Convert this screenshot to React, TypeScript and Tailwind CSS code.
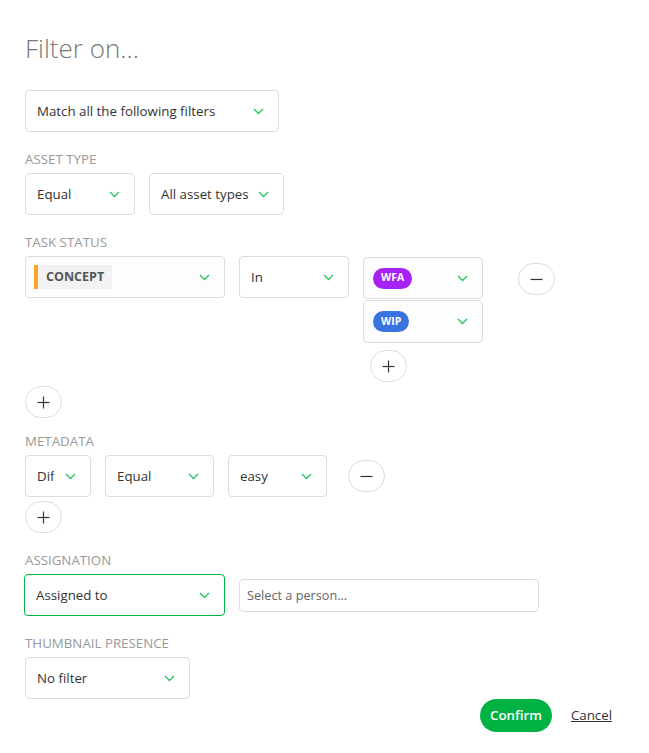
import React from "react";

const Chevron = () => (
  <svg width="11" height="7" viewBox="0 0 11 7" className="shrink-0">
    <path d="M1 1 L5.5 5.5 L10 1" fill="none" stroke="#22c55e" strokeWidth="1.3" />
  </svg>
);

function Select({
  children,
  w,
  green = false,
}: {
  children: React.ReactNode;
  w: string;
  green?: boolean;
}) {
  return (
    <div
      className={`${w} h-[42px] flex items-center justify-between pl-[11px] pr-[14px] rounded-[4px] bg-white border ${
        green ? "border-[#00b242]" : "border-[#dcdcdc]"
      } text-[13.3px] text-[#333]`}
    >
      <span className="truncate pt-[2px]">{children}</span>
      <Chevron />
    </div>
  );
}

const Round = ({ minus = false }: { minus?: boolean }) => (
  <div className="w-[37px] h-[32px] rounded-full border border-[#dcdcdc] bg-white flex items-center justify-center shrink-0">
    <svg width="13" height="13" viewBox="0 0 13 13">
      <path d="M0.5 6.5 H12.5" stroke="#333" strokeWidth="1.2" />
      {!minus && <path d="M6.5 0.5 V12.5" stroke="#333" strokeWidth="1.2" />}
    </svg>
  </div>
);

const Label = ({ children }: { children: React.ReactNode }) => (
  <div className="text-[13.3px] text-[#999] uppercase leading-[18px] mb-[5px]">{children}</div>
);

export default function App() {
  return (
    <div
      className="w-[649px] h-[753px] bg-white px-[25px] pt-[30px] relative"
      style={{ fontFamily: "'Open Sans', 'Noto Sans', sans-serif" }}
    >
      <h1 className="text-[26px] font-light text-[#777] leading-[36px]">Filter on...</h1>

      <div className="mt-[24px]">
        <Select w="w-[254px]">Match all the following filters</Select>
      </div>

      <div className="mt-[18px]">
        <Label>Asset type</Label>
        <div className="flex gap-[14px]">
          <Select w="w-[110px]">Equal</Select>
          <Select w="w-[135px]">All asset types</Select>
        </div>
      </div>

      <div className="mt-[18px]">
        <Label>Task status</Label>
        <div className="flex gap-[14px] items-start">
          <div className="w-[200px] h-[42px] flex items-center justify-between pl-[8px] pr-[14px] rounded-[4px] bg-[#fdfdfd] border border-[#dcdcdc]">
            <div className="flex items-stretch h-[24px]">
              <div className="w-[4px] bg-[#f5a623]" />
              <div className="bg-[#f2f2f2] px-[8px] pt-[1px] flex items-center text-[12.5px] font-bold text-[#555]">
                CONCEPT
              </div>
            </div>
            <Chevron />
          </div>
          <Select w="w-[110px]">In</Select>
          <div className="flex flex-col items-start">
            <div className="w-[120px] h-[42px] flex items-center justify-between pl-[9px] pr-[14px] rounded-[4px] bg-[#fdfdfd] border border-[#dcdcdc] mt-[1px]">
              <span className="h-[21px] px-[8px] rounded-full bg-[#a722f5] text-white text-[10.5px] font-bold flex items-center">
                WFA
              </span>
              <Chevron />
            </div>
            <div className="w-[120px] h-[43px] flex items-center justify-between pl-[9px] pr-[14px] rounded-[4px] bg-[#fdfdfd] border border-[#dcdcdc] mt-[1px]">
              <span className="h-[21px] px-[8px] rounded-full bg-[#3873e0] text-white text-[10.5px] font-bold flex items-center">
                WIP
              </span>
              <Chevron />
            </div>
            <div className="mt-[7px] ml-[7px]">
              <Round />
            </div>
          </div>
          <div className="ml-[21px] mt-[7px]">
            <Round minus />
          </div>
        </div>
        <div className="mt-[4px]">
          <Round />
        </div>
      </div>

      <div className="mt-[14px]">
        <Label>Metadata</Label>
        <div className="flex gap-[14px] items-start">
          <Select w="w-[66px]">Dif</Select>
          <Select w="w-[109px]">Equal</Select>
          <Select w="w-[99px]">easy</Select>
          <div className="ml-[7px] mt-[5px]">
            <Round minus />
          </div>
        </div>
        <div className="mt-[4px]">
          <Round />
        </div>
      </div>

      <div className="mt-[18px]">
        <Label>Assignation</Label>
        <div className="flex gap-[14px] items-center -ml-px">
          <Select w="w-[201px]" green>
            Assigned to
          </Select>
          <div className="w-[300px] h-[33px] rounded-[4px] border border-[#dcdcdc] bg-white flex items-center px-[7px] pt-[1px] text-[12.7px] text-[#666]">
            Select a person...
          </div>
        </div>
      </div>

      <div className="mt-[18px]">
        <Label>Thumbnail presence</Label>
        <Select w="w-[165px]">No filter</Select>
      </div>

      <div className="absolute left-[480px] top-[699px] flex items-center gap-[19px]">
        <button className="h-[33px] px-[10px] rounded-full bg-[#00b242] text-white text-[13.3px] font-semibold">
          Confirm
        </button>
        <span className="text-[13.3px] text-[#333] underline">Cancel</span>
      </div>
    </div>
  );
}
